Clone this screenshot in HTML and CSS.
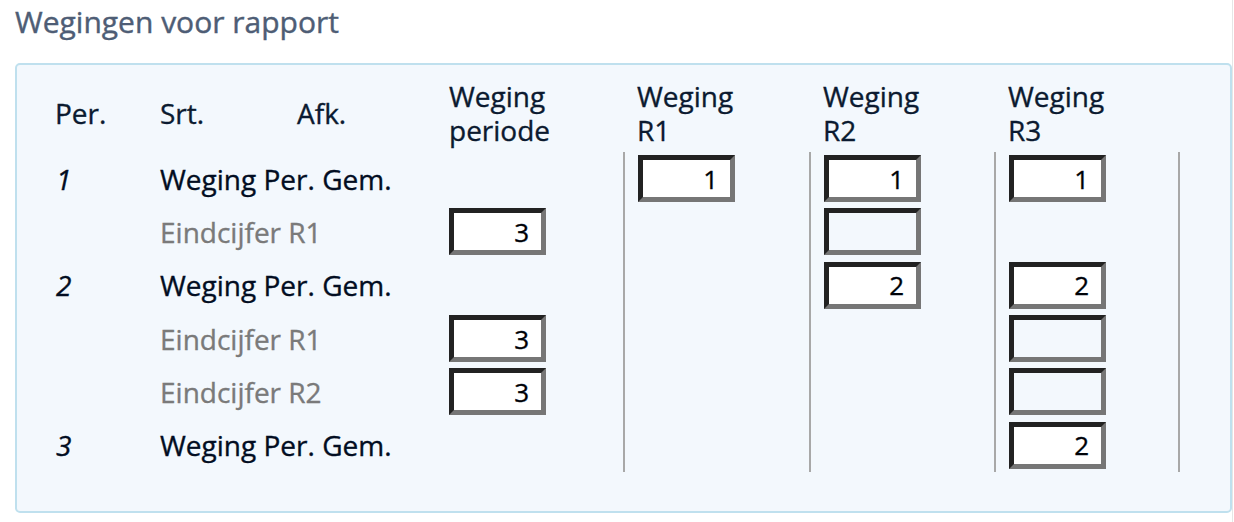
FILE: index.html
```html
<!DOCTYPE html>
<html lang="nl">
<head>
<meta charset="utf-8">
<title>Wegingen voor rapport</title>
<link rel="stylesheet" href="styles.css">
</head>
<body>
<div class="page">
  <h2 class="title">Wegingen voor rapport</h2>
  <div class="panel">
    <table class="weights">
      <colgroup>
        <col class="c-per">
        <col class="c-srt">
        <col class="c-afk">
        <col class="c-wp">
        <col class="c-r1">
        <col class="c-r2">
        <col class="c-r3">
      </colgroup>
      <thead>
        <tr>
          <th>Per.</th>
          <th>Srt.</th>
          <th>Afk.</th>
          <th>Weging<br>periode</th>
          <th>Weging<br>R1</th>
          <th>Weging<br>R2</th>
          <th>Weging<br>R3</th>
        </tr>
      </thead>
      <tbody>
        <tr>
          <td class="per">1</td>
          <td class="srt" colspan="2">Weging Per. Gem.</td>
          <td></td>
          <td class="r"><input class="w" type="text" value="1"></td>
          <td class="r"><input class="w" type="text" value="1"></td>
          <td class="r last"><input class="w" type="text" value="1"></td>
        </tr>
        <tr>
          <td class="per"></td>
          <td class="srt sub" colspan="2">Eindcijfer R1</td>
          <td><input class="w" type="text" value="3"></td>
          <td class="r"></td>
          <td class="r"><input class="w empty" type="text" value=""></td>
          <td class="r last"></td>
        </tr>
        <tr>
          <td class="per">2</td>
          <td class="srt" colspan="2">Weging Per. Gem.</td>
          <td></td>
          <td class="r"></td>
          <td class="r"><input class="w" type="text" value="2"></td>
          <td class="r last"><input class="w" type="text" value="2"></td>
        </tr>
        <tr>
          <td class="per"></td>
          <td class="srt sub" colspan="2">Eindcijfer R1</td>
          <td><input class="w" type="text" value="3"></td>
          <td class="r"></td>
          <td class="r"></td>
          <td class="r last"><input class="w empty" type="text" value=""></td>
        </tr>
        <tr>
          <td class="per"></td>
          <td class="srt sub" colspan="2">Eindcijfer R2</td>
          <td><input class="w" type="text" value="3"></td>
          <td class="r"></td>
          <td class="r"></td>
          <td class="r last"><input class="w empty" type="text" value=""></td>
        </tr>
        <tr>
          <td class="per">3</td>
          <td class="srt" colspan="2">Weging Per. Gem.</td>
          <td></td>
          <td class="r"></td>
          <td class="r"></td>
          <td class="r last"><input class="w" type="text" value="2"></td>
        </tr>
      </tbody>
    </table>
  </div>
</div>
</body>
</html>
```

FILE: styles.css
```css
html, body {
  margin: 0;
  padding: 0;
  background: #ffffff;
}

body {
  font-family: "Open Sans", "Noto Sans", sans-serif;
  color: #0b1a30;
}

.page {
  width: 1232px;
  height: 522px;
  border-right: 1px solid #e6e6e6;
  box-sizing: content-box;
}

.title {
  margin: 0;
  padding: 3px 0 0 15px;
  font-size: 30px;
  line-height: 37px;
  font-weight: 400;
  color: #4e5d75;
  -webkit-text-stroke: 0.4px #4e5d75;
}

.panel {
  margin: 23px 0 0 15px;
  width: 1217px;
  height: 450px;
  box-sizing: border-box;
  border: 2px solid #bfe0ee;
  border-radius: 5px;
  background: #f3f8fd;
  padding: 11px 0 0 24px;
}

.weights {
  border-collapse: separate;
  border-spacing: 0;
  table-layout: fixed;
  width: 1139px;
  font-size: 28px;
  font-weight: 400;
}

.c-per { width: 105px; }
.c-srt { width: 137px; }
.c-afk { width: 152px; }
.c-wp { width: 188px; }
.c-r1 { width: 186px; }
.c-r2 { width: 185px; }
.c-r3 { width: 186px; }

.weights th {
  font-weight: 400;
  text-align: left;
  vertical-align: middle;
  padding: 3px 0 5px 14px;
  line-height: 34px;
  color: #0b1a30;
  -webkit-text-stroke: 0.35px #0b1a30;
  white-space: nowrap;
}

.weights td {
  height: 53.33px;
  box-sizing: border-box;
  padding: 0 0 0 14px;
  vertical-align: middle;
  line-height: 34px;
  white-space: nowrap;
  color: #020d22;
  -webkit-text-stroke: 0.35px #020d22;
}

.weights td.per {
  font-style: italic;
  padding-left: 15px;
}

.weights td.sub {
  color: #7a7a7a;
  -webkit-text-stroke: 0.35px #7a7a7a;
}

.weights td.r {
  border-left: 2px solid #a8a8a8;
  padding-left: 13px;
}

.weights td.last {
  border-right: 2px solid #a8a8a8;
}

.w {
  display: block;
  width: 97px;
  height: 47px;
  box-sizing: border-box;
  margin: 0;
  border-style: solid;
  border-width: 5px;
  border-color: #222222 #767676 #767676 #222222;
  background: #ffffff;
  padding: 0 12px 0 4px;
  font-family: "Open Sans", "Noto Sans", sans-serif;
  font-size: 26px;
  font-weight: 400;
  text-align: right;
  color: #000000;
  outline: none;
}

.w.empty {
  background: transparent;
}
```
